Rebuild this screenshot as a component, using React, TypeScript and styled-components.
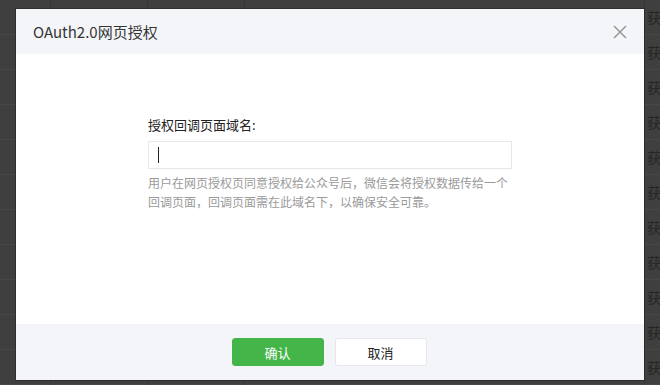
import React from "react";
import styled, { createGlobalStyle } from "styled-components";

const GlobalStyle = createGlobalStyle`
  html, body {
    margin: 0;
    padding: 0;
    background: #3f3f3f;
  }
  body {
    font-family: "Noto Sans CJK SC", "Noto Sans", sans-serif;
  }
`;

const Page = styled.div`
  position: relative;
  width: 660px;
  height: 385px;
  overflow: hidden;
  background: #3f3f3f;
`;

const BgTable = styled.div`
  display: grid;
  grid-template-columns: 50px 97px 97px 400px 16px;
  grid-auto-rows: 35px;
`;

const BgCell = styled.div<{ $first?: boolean }>`
  border-bottom: 1px solid #474747;
  border-left: ${(p) => (p.$first ? "none" : "1px solid #383838")};
  color: #262626;
  font-size: 14px;
  line-height: 35px;
  padding-left: 2px;
  white-space: nowrap;
  overflow: hidden;
`;

const Modal = styled.div`
  position: absolute;
  left: 16px;
  top: 9px;
  width: 628px;
  height: 371px;
  background: #fff;
  display: flex;
  flex-direction: column;
  box-shadow: 0 0 0 1px rgba(0, 0, 0, 0.25);
`;

const Header = styled.div`
  height: 45px;
  flex: none;
  background: #f4f5f9;
  display: flex;
  align-items: center;
  justify-content: space-between;
  padding: 0 16px 0 17px;
`;

const Title = styled.h3`
  margin: 0;
  font-size: 15px;
  font-weight: 400;
  color: #353535;
`;

const CloseButton = styled.button`
  border: none;
  background: none;
  padding: 0;
  width: 16px;
  height: 16px;
  display: flex;
  align-items: center;
  justify-content: center;
  cursor: pointer;
`;

const Body = styled.div`
  flex: 1;
  display: flex;
  justify-content: center;
  padding-top: 62px;
`;

const Field = styled.div`
  width: 364px;
  display: flex;
  flex-direction: column;
`;

const Label = styled.label`
  font-size: 13px;
  line-height: 18px;
  color: #222;
  margin-bottom: 7px;
`;

const Input = styled.div`
  height: 28px;
  box-sizing: border-box;
  border: 1px solid #e7e7eb;
  display: flex;
  align-items: center;
  padding-left: 9px;
`;

const Caret = styled.span`
  width: 1px;
  height: 16px;
  background: #222;
`;

const Hint = styled.p`
  margin: 4px 0 0;
  font-size: 12px;
  line-height: 19px;
  color: #9a9a9a;
`;

const Footer = styled.div`
  height: 56px;
  flex: none;
  background: #f4f5f9;
  display: flex;
  align-items: center;
  justify-content: center;
  gap: 11px;
  padding-right: 2px;
`;

const Button = styled.button<{ $primary?: boolean }>`
  width: 92px;
  height: 28px;
  border-radius: 3px;
  font-family: inherit;
  font-size: 13px;
  border: 1px solid ${(p) => (p.$primary ? "#44b549" : "#e4e8eb")};
  background: ${(p) => (p.$primary ? "#44b549" : "#fff")};
  color: ${(p) => (p.$primary ? "#fff" : "#222")};
  cursor: pointer;
`;

const rows = Array.from({ length: 11 });

export default function App() {
  return (
    <>
      <GlobalStyle />
      <Page>
        <BgTable>
          {rows.map((_, i) => (
            <React.Fragment key={i}>
              <BgCell $first />
              <BgCell />
              <BgCell />
              <BgCell />
              <BgCell>获</BgCell>
            </React.Fragment>
          ))}
        </BgTable>
        <Modal>
          <Header>
            <Title>OAuth2.0网页授权</Title>
            <CloseButton aria-label="关闭">
              <svg width="14" height="14" viewBox="0 0 14 14">
                <path d="M1 1 L13 13 M13 1 L1 13" stroke="#9a9a9a" strokeWidth="1.6" />
              </svg>
            </CloseButton>
          </Header>
          <Body>
            <Field>
              <Label>授权回调页面域名:</Label>
              <Input>
                <Caret />
              </Input>
              <Hint>
                用户在网页授权页同意授权给公众号后，微信会将授权数据传给一个回调页面，回调页面需在此域名下，以确保安全可靠。
              </Hint>
            </Field>
          </Body>
          <Footer>
            <Button $primary>确认</Button>
            <Button>取消</Button>
          </Footer>
        </Modal>
      </Page>
    </>
  );
}
